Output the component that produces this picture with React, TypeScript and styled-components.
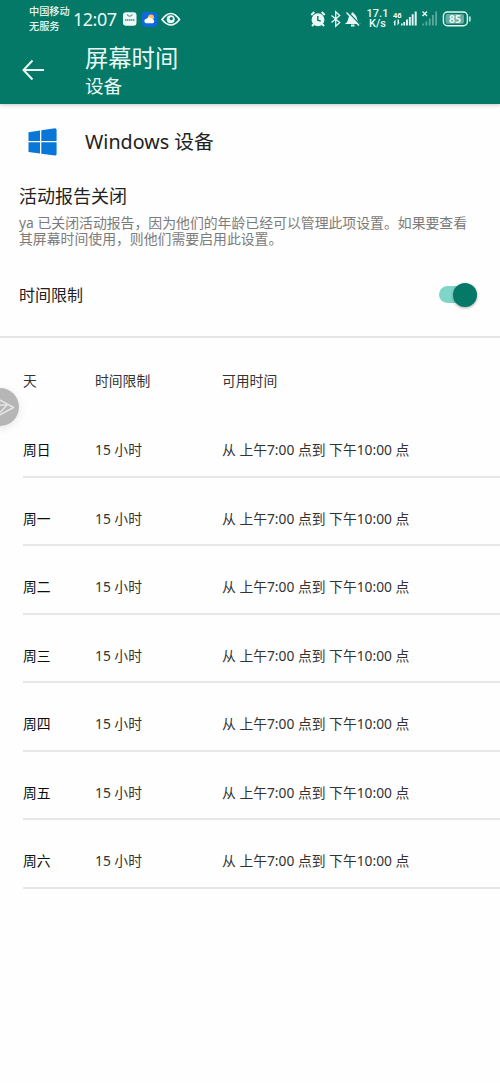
import React from "react";
import styled, { createGlobalStyle } from "styled-components";

const GlobalStyle = createGlobalStyle`
  * { box-sizing: border-box; }
  body {
    margin: 0;
    background: #fff;
    color: #222;
    font-family: "Noto Sans", "Noto Sans CJK SC", sans-serif;
  }
`;

const Screen = styled.div`
  position: relative;
  width: 500px;
  height: 1083px;
  background: #fefefe;
  overflow: hidden;
`;

const Header = styled.header`
  height: 104px;
  background: #047967;
  color: #e9f8f4;
  box-shadow: 0 1px 4px rgba(0, 0, 0, 0.22);
`;

const StatusBar = styled.div`
  height: 38px;
  padding: 0 29px;
  display: flex;
  justify-content: space-between;
`;

const StatusGroup = styled.div`
  display: flex;
  align-items: center;
`;

const Carrier = styled.div`
  width: 44px;
  font-size: 10.2px;
  line-height: 15px;
  font-weight: 500;
  white-space: nowrap;
`;

const Clock = styled.div`
  width: 50px;
  font-family: "Noto Sans", sans-serif;
  font-size: 18px;
  line-height: 38px;
  letter-spacing: -0.5px;
  white-space: nowrap;
`;

const Speed = styled.div`
  width: 25px;
  padding-right: 6px;
  display: flex;
  flex-direction: column;
  align-items: center;
  font-family: Roboto, sans-serif;
  font-size: 11px;
  line-height: 10px;
  font-weight: 500;
  white-space: nowrap;
`;

const TitleBar = styled.div`
  display: flex;
  height: 66px;
  padding: 6px 0 0 22px;
`;

const BackArrow = styled.svg`
  flex: none;
  width: 63px;
  height: 24px;
  margin-top: 14px;
`;

const Title = styled.h1`
  margin: 0;
  font-size: 23.3px;
  line-height: 28px;
  font-weight: 400;
`;

const Subtitle = styled.div`
  font-size: 18.6px;
  line-height: 28px;
`;

const DeviceRow = styled.div`
  display: flex;
  align-items: center;
  height: 76px;
  padding-left: 28px;
`;

const DeviceName = styled.div`
  margin-left: 28px;
  font-size: 19.7px;
  line-height: 28px;
`;

const Report = styled.section`
  height: 85px;
  padding: 3px 19px 0;
`;

const ReportTitle = styled.h2`
  margin: 0;
  font-size: 18px;
  line-height: 26px;
  font-weight: 400;
`;

const ReportText = styled.p`
  margin: 6px 0 0;
  color: #7b7b7b;
  font-size: 13.86px;
  line-height: 16px;
  white-space: nowrap;
`;

const LimitRow = styled.div`
  display: flex;
  align-items: center;
  justify-content: space-between;
  height: 73px;
  padding: 0 23px 12px 19px;
  border-bottom: 2px solid #e5e5e5;
`;

const LimitLabel = styled.div`
  padding-bottom: 2px;
  font-size: 16px;
`;

const Track = styled.div`
  width: 38px;
  height: 17px;
  border-radius: 9px;
  background: #7fd6c8;
  display: flex;
  align-items: center;
  justify-content: flex-end;
`;

const Knob = styled.div`
  width: 24px;
  height: 24px;
  border-radius: 50%;
  background: #047967;
  box-shadow: 0 1px 3px rgba(0, 0, 0, 0.35);
`;

const Table = styled.div`
  padding-left: 23px;
`;

const Row = styled.div<{ $head?: boolean }>`
  display: grid;
  grid-template-columns: 72px 127px 1fr;
  height: ${(p) => (p.$head ? 71 : 68.5)}px;
  padding-top: ${(p) => (p.$head ? 32 : 30)}px;
  border-bottom: ${(p) => (p.$head ? "none" : "2px solid #e7e7e7")};
  font-size: 13.8px;
  line-height: 22px;
  white-space: nowrap;
`;

const Cell = styled.span<{ $strong?: boolean }>`
  color: ${(p) => (p.$strong ? "#0c0c0c" : "#333")};
`;

const FloatingBall = styled.div`
  position: absolute;
  left: -19px;
  top: 388px;
  width: 38px;
  height: 38px;
  border-radius: 50%;
  background: #b6b6b6;
  box-shadow: 0 2px 8px rgba(0, 0, 0, 0.1);
`;

const days = ["周日", "周一", "周二", "周三", "周四", "周五", "周六"];

const LeftIcons = () => (
  <svg width="58" height="18" viewBox="0 0 58 18">
    <rect x="0" y="2.300" width="13.500" height="13.500" rx="3" fill="#eefaf7" />
    <path d="M4 4.500q2.700 3.500 5.400 0" stroke="#3c8f81" strokeWidth="1.200" fill="none" />
    <path d="M2 10h9.500" stroke="#6fa79d" strokeWidth="2" strokeDasharray="1.500 .5" />
    <rect x="19" y="2" width="15" height="14.800" rx="3" fill="#1268e0" />
    <circle cx="28" cy="7.500" r="3" fill="#f8c84a" />
    <path d="M23 13.300a2.300 2.300 0 0 1 .5-4.500a3.400 3.400 0 0 1 6 .6a2 2 0 0 1 .3 3.900z" fill="#fff" />
    <path d="M39 9.500q9-12 17.500 0q-8.500 11-17.500 0z" stroke="#eefaf7" strokeWidth="1.700" fill="none" />
    <circle cx="47.700" cy="9.200" r="4" fill="#eefaf7" />
    <circle cx="48.300" cy="8.600" r="1.700" fill="#047967" />
  </svg>
);

const AlertIcons = () => (
  <svg width="58" height="18" viewBox="0 0 58 18" fill="none" stroke="#e9f8f4" strokeWidth="1.300">
    <circle cx="8" cy="9.700" r="5.800" fill="#e9f8f4" />
    <path d="M1.300 5l3-3M11.700 2l3 3M4 14l-2 2M12 14l2 2" strokeWidth="2" />
    <path d="M7.800 6v4.200l3 1" stroke="#047967" strokeWidth="1.400" />
    <path d="M21.500 5.500l8.200 7-4 3.800V1.700l4 3.800-8.200 7" />
    <path d="M37.500 13c2-1.500 1-8.500 5.200-8.500s3 7 5.200 8.500z" fill="#e9f8f4" strokeWidth="1.800" />
    <path d="M42.700 2.500v2M41 15.500h3.500" strokeWidth="2" />
    <path d="M38 2l12.500 13" stroke="#047967" strokeWidth="1.300" />
    <path d="M36.500 2.500l12.500 13" strokeWidth="1.500" />
  </svg>
);

const SignalIcons = () => (
  <svg width="78" height="20" viewBox="0 0 78 20" fill="#e9f8f4">
    <text x="0" y="8.500" fontSize="7.500" fontWeight="700" fontFamily="Noto Sans">46</text>
    <path d="M0.300 13.500l2.200-3V16.500H1.100v-3zM6.700 13.500l-2.200 3V10.500h1.400v3zM8 14.500h1.600v2H8zM10.300 13h1.800v3.500h-1.800zM13 10.500h1.900v6H13zM15.900 8h1.900v8.500h-1.900zM18.700 5.300h1.900v11.200h-1.900zM21.700 2.500h2v14h-2z" />
    <path d="M29.500 2.500l4.500 4.500M34 2.500L29.500 7" stroke="#e9f8f4" strokeWidth="1.400" />
    <path d="M29.300 14.500h1.800v2h-1.800zM32.500 12.500h1.800v4h-1.800zM35.800 9.500h1.800v7h-1.800zM39 6h1.800v10.500H39zM42.200 2.500h1.800v14h-1.800z" opacity=".38" />
    <rect x="50.400" y="3" width="24" height="13.800" rx="4" fill="none" stroke="#e9f8f4" strokeWidth="1.400" />
    <rect x="52.500" y="5" width="18.500" height="9.800" rx="2" opacity=".42" />
    <path d="M76.200 7.500h1.400v5h-1.400z" />
    <text x="62" y="13.600" fontSize="10.500" fontWeight="700" textAnchor="middle" fontFamily="Noto Sans">85</text>
  </svg>
);

export default function App() {
  return (
    <Screen>
      <GlobalStyle />
      <Header>
        <StatusBar>
          <StatusGroup>
            <Carrier>中国移动<br />无服务</Carrier>
            <Clock>12:07</Clock>
            <LeftIcons />
          </StatusGroup>
          <StatusGroup>
            <AlertIcons />
            <Speed>
              <span>17.1</span>
              <span>K/s</span>
            </Speed>
            <SignalIcons />
          </StatusGroup>
        </StatusBar>
        <TitleBar>
          <BackArrow viewBox="0 0 63 24" fill="none" stroke="#e9f8f4" strokeWidth="2">
            <path d="M22 12H1.500M10.500 2.500L1.500 12l9 9.500" />
          </BackArrow>
          <div>
            <Title>屏幕时间</Title>
            <Subtitle>设备</Subtitle>
          </div>
        </TitleBar>
      </Header>
      <DeviceRow>
        <svg width="29" height="28" viewBox="0 0 29 28" fill="#0877d8">
          <path d="M.5 4.300L12 2.500V13H.5zM13.300 2.300L27 .3q1.600 0 1.600 1.500V13H13.300zM.5 14.300H12V25.500L.5 24zM13.300 14.300h15.300V26q0 1.500-1.600 1.500l-13.700-1.800z" />
        </svg>
        <DeviceName>Windows 设备</DeviceName>
      </DeviceRow>
      <Report>
        <ReportTitle>活动报告关闭</ReportTitle>
        <ReportText>
          ya 已关闭活动报告，因为他们的年龄已经可以管理此项设置。如果要查看
          <br />
          其屏幕时间使用，则他们需要启用此设置。
        </ReportText>
      </Report>
      <LimitRow>
        <LimitLabel>时间限制</LimitLabel>
        <Track><Knob /></Track>
      </LimitRow>
      <Table>
        <Row $head>
          <Cell>天</Cell>
          <Cell>时间限制</Cell>
          <Cell>可用时间</Cell>
        </Row>
        {days.map((day) => (
          <Row key={day}>
            <Cell $strong>{day}</Cell>
            <Cell>15 小时</Cell>
            <Cell>从 上午7:00 点到 下午10:00 点</Cell>
          </Row>
        ))}
      </Table>
      <FloatingBall>
        <svg width="38" height="38" viewBox="0 0 38 38" fill="none" stroke="#e6e6e6" strokeWidth="1.500" strokeLinejoin="round">
          <path d="M17 11L32.500 19.500L17 28M17 17h9l-7 7.500" />
        </svg>
      </FloatingBall>
    </Screen>
  );
}
